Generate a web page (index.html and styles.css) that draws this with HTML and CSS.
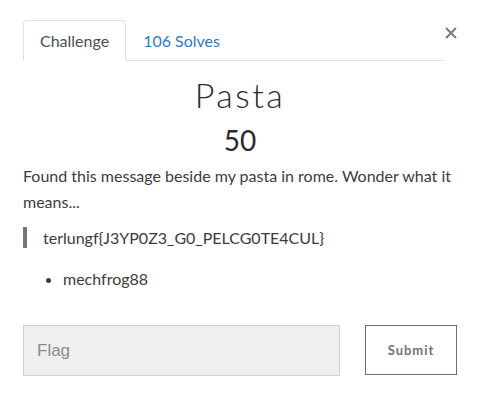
FILE: index.html
```html
<!DOCTYPE html>
<html>
<head>
<meta charset="utf-8">
<link rel="stylesheet" href="styles.css">
</head>
<body>
<div class="modal">
  <div class="header">
    <ul class="tabs">
      <li class="tab active">Challenge</li>
      <li class="tab link">106 Solves</li>
    </ul>
    <button class="close" aria-label="Close">
      <svg width="12" height="12" viewBox="0 0 12 12"><path d="M1 1L11 11M11 1L1 11" stroke="#7a7a7a" stroke-width="2"/></svg>
    </button>
  </div>
  <h2 class="title">Pasta</h2>
  <h3 class="value">50</h3>
  <p class="desc">Found this message beside my pasta in rome. Wonder what it means...</p>
  <blockquote class="quote">terlungf{J3YP0Z3_G0_PELCG0TE4CUL}</blockquote>
  <ul class="list"><li>mechfrog88</li></ul>
  <div class="form">
    <input class="flag" type="text" placeholder="Flag">
    <button class="submit">Submit</button>
  </div>
</div>
</body>
</html>
```
FILE: styles.css
```css
html, body { margin: 0; padding: 0; background: #fff; }
body { font-family: Lato, "Liberation Sans", sans-serif; color: #212529; }
.modal { padding: 20px 22px 0 23px; }
.header { display: flex; align-items: flex-start; }
.tabs { list-style: none; margin: 0; padding: 0; display: flex; border-bottom: 1px solid #dee2e6; width: 420px; height: 41px; box-sizing: border-box; }
.tab { font-size: 16px; padding: 0 16px; line-height: 40px; height: 41px; box-sizing: border-box; border: 1px solid transparent; border-radius: 4px 4px 0 0; }
.tab.active { color: #495057; border-color: #dee2e6 #dee2e6 #fff; background: #fff; }
.tab.link { color: #337ab7; }
.close { margin-left: auto; margin-top: 7px; margin-right: 0; background: none; border: 0; padding: 0; width: 12px; height: 12px; display: flex; }
.title { margin: 14px 0 0; text-align: center; font-weight: 300; font-size: 34px; letter-spacing: 2.5px; line-height: 40px; color: #2b2b2b; }
.value { margin: 7px 0 0; text-align: center; font-weight: 400; font-size: 28px; line-height: 36px; color: #2b2b2b; }
.desc { margin: 5px 0 0; font-size: 16px; line-height: 26px; color: #3c3c3c; }
.quote { margin: 12px 0 0; border-left: 4px solid #777; padding: 0 0 0 16px; font-size: 16px; line-height: 21px; color: #3c3c3c; }
.list { margin: 19px 0 0; padding-left: 40px; font-size: 16px; line-height: 24px; color: #3c3c3c; }
.form { display: flex; margin-top: 34px; gap: 25px; align-items: flex-start; }
.flag { width: 317px; height: 51px; box-sizing: border-box; background: #efefef; border: 1px solid #d0d0d0; font-family: "Liberation Sans", Arial, sans-serif; font-size: 17px; padding: 0 13px; margin: 0; color: #333; }
.flag::placeholder { color: #8a8a8a; }
.submit { width: 92px; height: 50px; box-sizing: border-box; background: #fff; border: 1px solid #6c6c6c; font-family: Lato, sans-serif; font-weight: 700; font-size: 13px; letter-spacing: 1px; color: #6c757d; padding: 0; margin: 0; }
```
